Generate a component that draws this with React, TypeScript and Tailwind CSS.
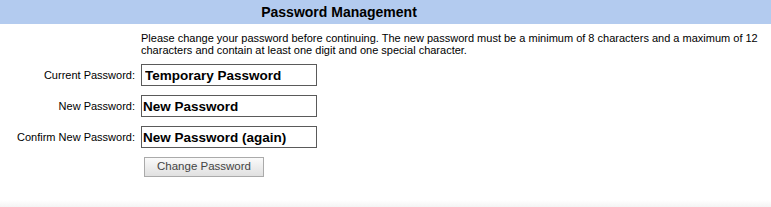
import React from 'react';

const rows = [
  { label: 'Current Password:', value: 'Temporary Password', pad: 'pl-[3px]' },
  { label: 'New Password:', value: 'New Password', pad: 'pl-[1px]' },
  { label: 'Confirm New Password:', value: 'New Password (again)', pad: 'pl-[1px]' },
];

const App: React.FC = () => {
  return (
    <div className="w-[771px] h-[207px] bg-white flex flex-col font-['Liberation_Sans',Arial,sans-serif] text-black">
      <div className="h-[24px] bg-[#b3cbef] flex items-center justify-center pr-[93px]">
        <h1 className="text-[14px] font-bold">Password Management</h1>
      </div>

      <div className="grid grid-cols-[141px_1fr] pt-[8px]">
        <div></div>
        <p className="text-[11px] leading-[12px] pr-[4px]">
          Please change your password before continuing. The new password must be a minimum of 8 characters and a maximum of 12
          characters and contain at least one digit and one special character.
        </p>
      </div>

      <div className="flex flex-col gap-[9px] mt-[8px]">
        {rows.map((r) => (
          <div key={r.label} className="grid grid-cols-[141px_1fr] items-center">
            <label className="text-[11px] text-right pr-[6px]">{r.label}</label>
            <input
              type="text"
              defaultValue={r.value}
              className={`w-[176px] h-[22px] border border-[#5a5a5a] text-[13.5px] font-bold ${r.pad} outline-none bg-white`}
            />
          </div>
        ))}
      </div>

      <div className="grid grid-cols-[144px_1fr] mt-[9px]">
        <div></div>
        <button className="w-[120px] h-[20px] border border-[#aaaaaa] bg-gradient-to-b from-[#fafafa] to-[#e0e0e0] text-[11.5px] text-[#444]">
          Change Password
        </button>
      </div>

      <div className="flex-1"></div>
      <div className="h-[7px] bg-gradient-to-b from-white to-[#f4f4f4]"></div>
    </div>
  );
};

export default App;
